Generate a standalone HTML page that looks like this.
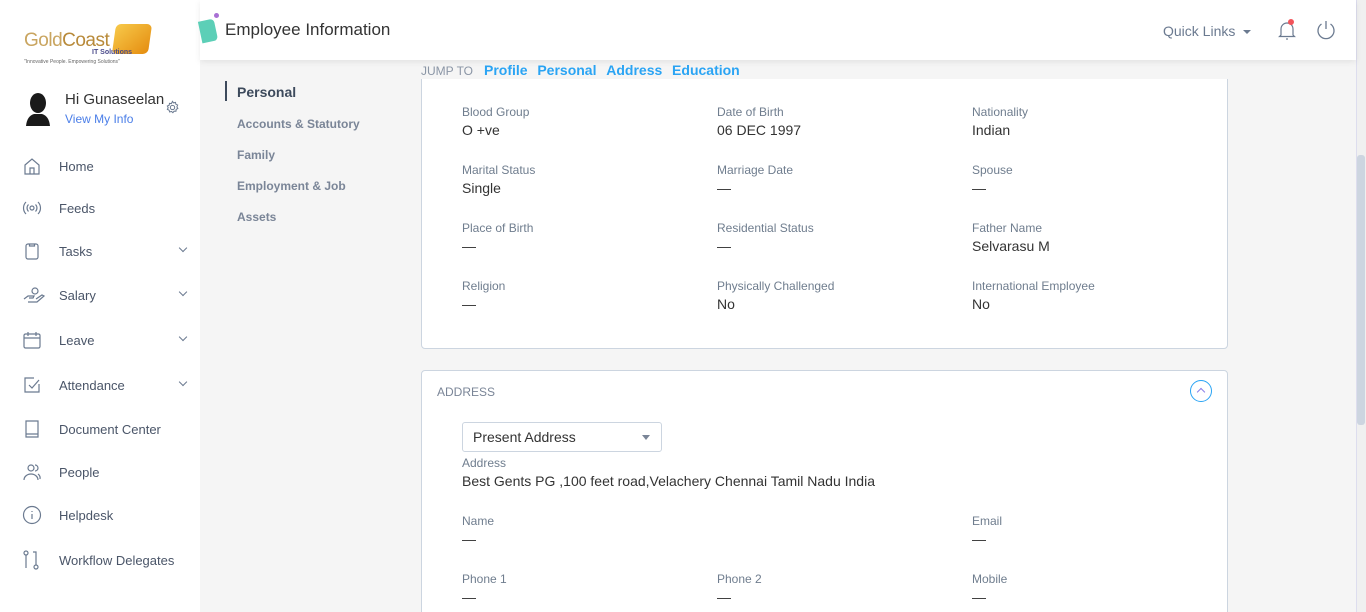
<!DOCTYPE html>
<html style="overflow:hidden;width:1366px;height:612px"><head><meta charset="utf-8">
<style>
*{box-sizing:border-box;margin:0;padding:0}
body{width:1366px;height:612px;overflow:hidden;background:#f5f5f5;font-family:"Liberation Sans",sans-serif;position:relative}
.side{position:absolute;left:0;top:0;width:200px;height:612px;background:#fff}
.nav{position:absolute;left:0;width:200px;height:30px;display:flex;align-items:center}
.nav svg{position:absolute;left:22px}
.nav span{position:absolute;left:59px;font-size:13px;color:#4a5568}
.nav .chev{position:absolute;left:180px;width:6px;height:6px;border-right:1.2px solid #6b7a90;border-bottom:1.2px solid #6b7a90;transform:rotate(45deg);top:9px}
.hdr{position:absolute;left:200px;top:0;width:1156px;height:60px;background:#fff;box-shadow:0 2px 6px rgba(0,0,0,.08);z-index:3}
.card{position:absolute;left:421px;width:807px;background:#fff;border:1px solid #ccd5e0;border-radius:4px}
.f{position:absolute}
.f .l{font-size:12px;color:#6f7d8e}
.f .v{font-size:14px;color:#333;margin-top:3px}
.sub{position:absolute;left:237px;font-size:12px;color:#7a8597;font-weight:bold}
</style></head><body>
<div class="side">
  <div style="position:absolute;left:22px;top:22px;width:130px;height:46px">
    <span style="position:absolute;left:2px;top:8px;font-size:19px;color:#c9a560;letter-spacing:-0.5px">Gold<span style="color:#b88a3a">Coast</span></span>
    <div style="position:absolute;left:92px;top:2px;width:36px;height:30px;border-radius:5px;background:linear-gradient(135deg,#f7c94a,#e58d10);transform:skewX(-8deg)"></div>
    <span style="position:absolute;left:70px;top:27px;font-size:7px;color:#4a4a8a;font-weight:bold">IT Solutions</span>
    <span style="position:absolute;left:2px;top:37px;font-size:5px;color:#666">"Innovative People. Empowering Solutions"</span>
  </div>
  <svg style="position:absolute;left:24px;top:92px" width="28" height="34" viewBox="0 0 28 34"><ellipse cx="14" cy="11" rx="8" ry="10" fill="#1a1a1a"/><path d="M2 34 Q3 24 10 22 L18 22 Q25 24 26 34Z" fill="#1a1a1a"/></svg>
  <div style="position:absolute;left:65px;top:91px;font-size:15px;color:#333">Hi Gunaseelan</div>
  <div style="position:absolute;left:65px;top:112px;font-size:12px;color:#4a7ee8">View My Info</div>
  <svg style="position:absolute;left:165px;top:100px" width="15" height="15" viewBox="0 0 16 16" fill="none" stroke="#6b7a90" stroke-width="1.1"><circle cx="8" cy="8" r="2.3"/><path d="M8 1.5l1.2 1.6 2-.5.4 2 1.9.8-.8 1.9 1 1.7-1.8 1-.2 2-2-.1-1.3 1.6-1.5-1.3-1.9.6-.6-1.9-1.9-.9.9-1.8-.9-1.8 1.9-.8.4-2 2 .3z"/></svg>
  <div class="nav" style="top:151px"><svg width="20" height="20" viewBox="0 0 20 20" fill="none" stroke="#6b7a90" stroke-width="1.2"><path d="M3 9L10 3l7 6v9H3z"/><path d="M8 18v-6h4v6"/></svg><span>Home</span></div>
  <div class="nav" style="top:193px"><svg width="20" height="20" viewBox="0 0 20 20" fill="none" stroke="#6b7a90" stroke-width="1.2"><circle cx="10" cy="10" r="2"/><path d="M6.5 6.5a5 5 0 000 7M13.5 6.5a5 5 0 010 7M4 4a8.5 8.5 0 000 12M16 4a8.5 8.5 0 010 12"/></svg><span>Feeds</span></div>
  <div class="nav" style="top:236px"><svg width="20" height="20" viewBox="0 0 20 20" fill="none" stroke="#6b7a90" stroke-width="1.2"><rect x="4" y="3" width="12" height="15" rx="2"/><path d="M7.5 3v2h5V3"/></svg><span>Tasks</span><i class="chev"></i></div>
  <div class="nav" style="top:280px"><svg width="24" height="20" viewBox="0 0 24 20" fill="none" stroke="#6b7a90" stroke-width="1.2"><circle cx="13" cy="6" r="3"/><path d="M2 14l4-3h6l-1 2h-4M6 17l9 0 7-6-2-1-6 4"/></svg><span>Salary</span><i class="chev"></i></div>
  <div class="nav" style="top:325px"><svg width="20" height="20" viewBox="0 0 20 20" fill="none" stroke="#6b7a90" stroke-width="1.2"><rect x="2" y="4" width="16" height="14" rx="1.5"/><path d="M2 8h16M6 2v4M14 2v4"/></svg><span>Leave</span><i class="chev"></i></div>
  <div class="nav" style="top:370px"><svg width="20" height="20" viewBox="0 0 20 20" fill="none" stroke="#6b7a90" stroke-width="1.2"><path d="M17 9v8H3V3h9"/><path d="M7 10l3 3 7-8"/></svg><span>Attendance</span><i class="chev"></i></div>
  <div class="nav" style="top:414px"><svg width="20" height="20" viewBox="0 0 20 20" fill="none" stroke="#6b7a90" stroke-width="1.2"><path d="M4 2h12v16H4zM4 15h12"/></svg><span>Document Center</span></div>
  <div class="nav" style="top:457px"><svg width="20" height="20" viewBox="0 0 20 20" fill="none" stroke="#6b7a90" stroke-width="1.2"><circle cx="9" cy="6" r="3"/><path d="M2 18a7 6 0 0114 0M13 3a3 3 0 010 6M16 12a5 5 0 012 5"/></svg><span>People</span></div>
  <div class="nav" style="top:500px"><svg width="20" height="20" viewBox="0 0 20 20" fill="none" stroke="#6b7a90" stroke-width="1.2"><circle cx="10" cy="10" r="8.5"/><path d="M10 9v5M10 6v1"/></svg><span>Helpdesk</span></div>
  <div class="nav" style="top:545px"><svg width="20" height="22" viewBox="0 0 20 22" fill="none" stroke="#6b7a90" stroke-width="1.2"><circle cx="4" cy="4" r="2"/><path d="M4 6v13M11 3h3v13"/><circle cx="14" cy="18" r="2"/></svg><span>Workflow Delegates</span></div>
</div>
<div class="hdr">
  <div style="position:absolute;left:0;top:20px;width:16px;height:22px;background:#5ccfb7;border-radius:0 4px 4px 0;transform:rotate(-12deg)"></div>
  <div style="position:absolute;left:14px;top:13px;width:5px;height:5px;border-radius:50%;background:#a870d4"></div>
  <div style="position:absolute;left:25px;top:20px;font-size:17px;color:#333">Employee Information</div>
  <div style="position:absolute;left:963px;top:23px;font-size:14px;color:#6b7a90">Quick Links</div>
  <div style="position:absolute;left:1043px;top:30px;border:4px solid transparent;border-top:4px solid #6b7a90;border-bottom:0"></div>
  <svg style="position:absolute;left:1077px;top:19px" width="20" height="22" viewBox="0 0 20 22" fill="none" stroke="#6b7a90" stroke-width="1.2"><path d="M4 16V10a6 6 0 0112 0v6l1.5 1.5h-15z"/><path d="M9 20h2"/></svg>
  <div style="position:absolute;left:1088px;top:19px;width:6px;height:6px;border-radius:50%;background:#f2545b"></div>
  <svg style="position:absolute;left:1115px;top:19px" width="22" height="22" viewBox="0 0 22 22" fill="none" stroke="#6b7a90" stroke-width="1.3"><path d="M6.5 5a8 8 0 109 0M11 2v8"/></svg>
</div>
<div style="position:absolute;left:1356px;top:0;width:10px;height:612px;background:#f0f0f0;border-left:1px solid #dde"></div>
<div style="position:absolute;left:1357px;top:155px;width:8px;height:270px;background:#cdd5e0;border-radius:3px"></div>

<div style="position:absolute;left:225px;top:81px;width:2px;height:20px;background:#3d4a5c"></div>
<div style="position:absolute;left:237px;top:84px;font-size:14px;color:#3d4a5c;font-weight:bold">Personal</div>
<div class="sub" style="top:117px">Accounts &amp; Statutory</div>
<div class="sub" style="top:148px">Family</div>
<div class="sub" style="top:179px">Employment &amp; Job</div>
<div class="sub" style="top:210px">Assets</div>

<div class="card" style="top:50px;height:299px"></div>
<div style="position:absolute;left:410px;top:60px;width:830px;height:19px;background:#f5f5f5"></div>
<div style="position:absolute;left:421px;top:64px;font-size:12px;color:#8a95a5">JUMP TO</div>
<div style="position:absolute;left:484px;top:62px;font-size:14px;color:#2aa4f4;font-weight:bold;word-spacing:1px">Profile &nbsp;Personal &nbsp;Address &nbsp;Education</div>

<div class="f" style="left:462px;top:105px"><div class="l">Blood Group</div><div class="v">O +ve</div></div>
<div class="f" style="left:717px;top:105px"><div class="l">Date of Birth</div><div class="v">06 DEC 1997</div></div>
<div class="f" style="left:972px;top:105px"><div class="l">Nationality</div><div class="v">Indian</div></div>
<div class="f" style="left:462px;top:163px"><div class="l">Marital Status</div><div class="v">Single</div></div>
<div class="f" style="left:717px;top:163px"><div class="l">Marriage Date</div><div class="v">—</div></div>
<div class="f" style="left:972px;top:163px"><div class="l">Spouse</div><div class="v">—</div></div>
<div class="f" style="left:462px;top:221px"><div class="l">Place of Birth</div><div class="v">—</div></div>
<div class="f" style="left:717px;top:221px"><div class="l">Residential Status</div><div class="v">—</div></div>
<div class="f" style="left:972px;top:221px"><div class="l">Father Name</div><div class="v">Selvarasu M</div></div>
<div class="f" style="left:462px;top:279px"><div class="l">Religion</div><div class="v">—</div></div>
<div class="f" style="left:717px;top:279px"><div class="l">Physically Challenged</div><div class="v">No</div></div>
<div class="f" style="left:972px;top:279px"><div class="l">International Employee</div><div class="v">No</div></div>

<div class="card" style="top:370px;height:250px"></div>
<div style="position:absolute;left:437px;top:385px;font-size:12px;color:#7a8597">ADDRESS</div>
<div style="position:absolute;left:1190px;top:380px;width:22px;height:22px;border:1.3px solid #2aa4f4;border-radius:50%"></div>
<div style="position:absolute;left:1198px;top:389px;width:6px;height:6px;border-left:1.3px solid #8a7ee8;border-top:1.3px solid #8a7ee8;transform:rotate(45deg)"></div>
<div style="position:absolute;left:462px;top:422px;width:200px;height:30px;border:1px solid #ccd5e0;border-radius:3px;background:#fff"></div>
<div style="position:absolute;left:473px;top:429px;font-size:14px;color:#333">Present Address</div>
<div style="position:absolute;left:642px;top:435px;border:4.5px solid transparent;border-top:5px solid #7a8597;border-bottom:0"></div>
<div class="f" style="left:462px;top:456px"><div class="l">Address</div><div class="v">Best Gents PG ,100 feet road,Velachery Chennai Tamil Nadu India</div></div>
<div class="f" style="left:462px;top:514px"><div class="l">Name</div><div class="v">—</div></div>
<div class="f" style="left:972px;top:514px"><div class="l">Email</div><div class="v">—</div></div>
<div class="f" style="left:462px;top:572px"><div class="l">Phone 1</div><div class="v">—</div></div>
<div class="f" style="left:717px;top:572px"><div class="l">Phone 2</div><div class="v">—</div></div>
<div class="f" style="left:972px;top:572px"><div class="l">Mobile</div><div class="v">—</div></div>
</body></html>
